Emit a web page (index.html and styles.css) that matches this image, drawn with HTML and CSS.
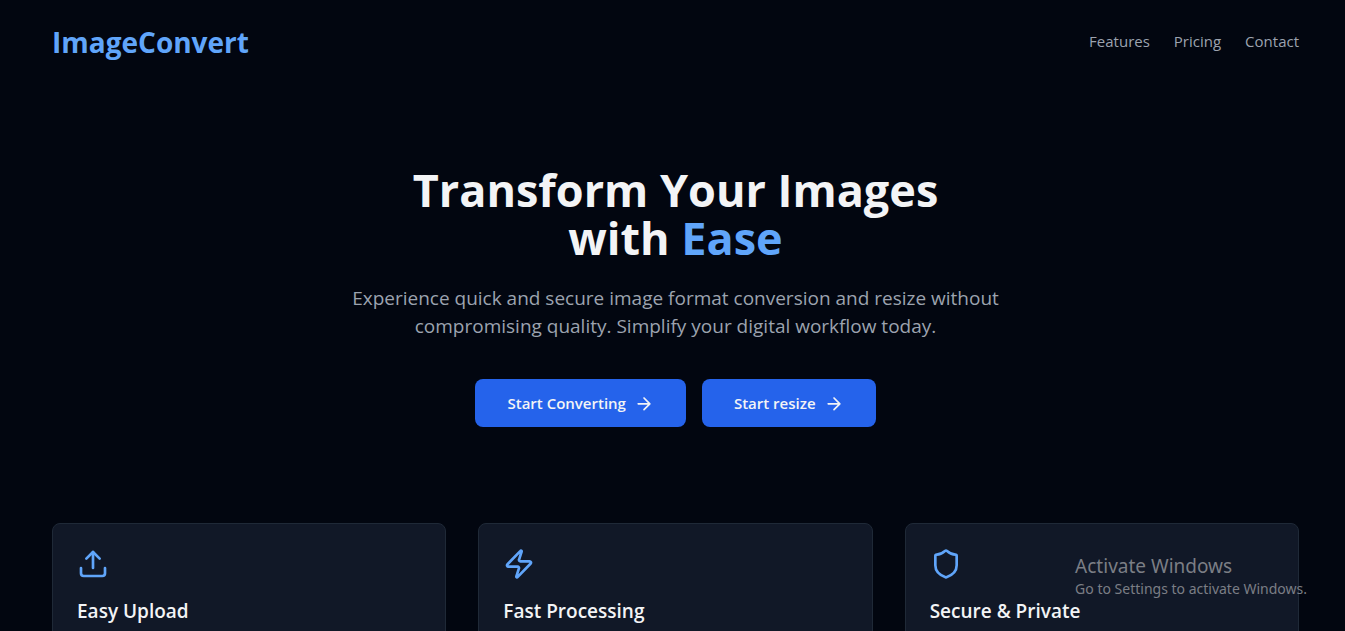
FILE: index.html
```html
<!DOCTYPE html>
<html lang="en">
<head>
<meta charset="utf-8">
<meta name="viewport" content="width=device-width, initial-scale=1">
<title>ImageConvert</title>
<link rel="stylesheet" href="styles.css">
</head>
<body>
<div class="page">
  <header class="header">
    <div class="logo">ImageConvert</div>
    <nav class="nav">
      <a href="#features">Features</a>
      <a href="#pricing">Pricing</a>
      <a href="#contact">Contact</a>
    </nav>
  </header>
  <main>
    <section class="hero">
      <h1 class="title">Transform Your Images<br>with <span class="accent">Ease</span></h1>
      <p class="lead">Experience quick and secure image format conversion and resize without<br>compromising quality. Simplify your digital workflow today.</p>
      <div class="actions">
        <button class="button" type="button">Start Converting
          <svg class="arrow" viewBox="0 0 24 24" aria-hidden="true"><path d="M5 13h14M12 6l7 7-7 7"/></svg>
        </button>
        <button class="button" type="button">Start resize
          <svg class="arrow" viewBox="0 0 24 24" aria-hidden="true"><path d="M5 13h14M12 6l7 7-7 7"/></svg>
        </button>
      </div>
    </section>
    <section class="features" id="features">
      <article class="card">
        <svg class="icon" viewBox="0 0 24 24" aria-hidden="true"><path d="M21 15v4a2 2 0 0 1-2 2H5a2 2 0 0 1-2-2v-4"/><path d="M17 8l-5-5-5 5"/><path d="M12 3v12"/></svg>
        <h2 class="card-title">Easy Upload</h2>
      </article>
      <article class="card">
        <svg class="icon" viewBox="0 0 24 24" aria-hidden="true"><path d="M4 14a1 1 0 0 1-.78-1.63l9.9-10.2a.5.5 0 0 1 .86.46l-1.92 6.02A1 1 0 0 0 13 10h7a1 1 0 0 1 .78 1.63l-9.9 10.2a.5.5 0 0 1-.86-.46l1.92-6.02A1 1 0 0 0 11 14z"/></svg>
        <h2 class="card-title">Fast Processing</h2>
      </article>
      <article class="card">
        <svg class="icon" viewBox="0 0 24 24" aria-hidden="true"><path d="M20 13c0 5-3.500 7.500-7.660 8.950a1 1 0 0 1-.67-.01C7.500 20.500 4 18 4 13V6a1 1 0 0 1 1-1c2 0 4.500-1.200 6.240-2.720a1.170 1.170 0 0 1 1.520 0C14.510 3.810 17 5 19 5a1 1 0 0 1 1 1z"/></svg>
        <h2 class="card-title">Secure &amp; Private</h2>
      </article>
    </section>
  </main>
  <aside class="notice">
    <p class="notice-title">Activate Windows</p>
    <p class="notice-text">Go to Settings to activate Windows.</p>
  </aside>
</div>
</body>
</html>
```

FILE: styles.css
```css
* {
  box-sizing: border-box;
}

body {
  margin: 0;
  background: #020610;
  color: #f3f4f6;
  font-family: "Open Sans", "Noto Sans", sans-serif;
}

h1, h2, p {
  margin: 0;
}

.page {
  position: relative;
  height: 100vh;
  overflow: hidden;
  padding: 0 46px 0 52px;
}

.header {
  display: flex;
  justify-content: space-between;
  align-items: center;
  padding: 24px 0;
}

.logo {
  color: #60a5fa;
  font-size: 28px;
  font-weight: 700;
  line-height: 36px;
}

.nav {
  display: flex;
  gap: 24px;
  padding-bottom: 2px;
}

.nav a {
  color: #9ca3af;
  font-size: 15px;
  line-height: 24px;
  text-decoration: none;
}

.hero {
  display: flex;
  flex-direction: column;
  align-items: center;
  padding: 82px 0 96px;
  text-align: center;
}

.title {
  font-size: 45px;
  font-weight: 700;
  line-height: 48px;
}

.accent {
  color: #60a5fa;
}

.lead {
  margin-top: 22px;
  color: #9ca3af;
  font-size: 19px;
  line-height: 28px;
}

.actions {
  display: flex;
  gap: 16px;
  margin-top: 39px;
}

.button {
  display: flex;
  align-items: center;
  gap: 8px;
  height: 48px;
  padding: 0 32px;
  border: 0;
  border-radius: 8px;
  background: #2563eb;
  color: #f3f4f6;
  font-family: inherit;
  font-size: 15px;
  font-weight: 600;
  cursor: pointer;
}

.arrow,
.icon {
  fill: none;
  stroke: currentColor;
  stroke-width: 2;
  stroke-linecap: round;
  stroke-linejoin: round;
}

.arrow {
  width: 20px;
  height: 20px;
}

.features {
  display: grid;
  grid-template-columns: repeat(3, 1fr);
  gap: 32px;
}

.card {
  padding: 24px 24px 80px;
  border: 1px solid #1f2937;
  border-radius: 8px;
  background: #111827;
}

.icon {
  display: block;
  width: 32px;
  height: 32px;
  color: #60a5fa;
}

.card-title {
  margin-top: 17px;
  font-size: 19px;
  font-weight: 600;
  line-height: 28px;
}

.notice {
  position: absolute;
  right: 38px;
  bottom: 32px;
  color: #7b7e85;
  font-family: "Noto Sans", "Open Sans", sans-serif;
}

.notice-title {
  font-size: 19px;
  line-height: 26px;
}

.notice-text {
  font-size: 14px;
  line-height: 20px;
}
```
